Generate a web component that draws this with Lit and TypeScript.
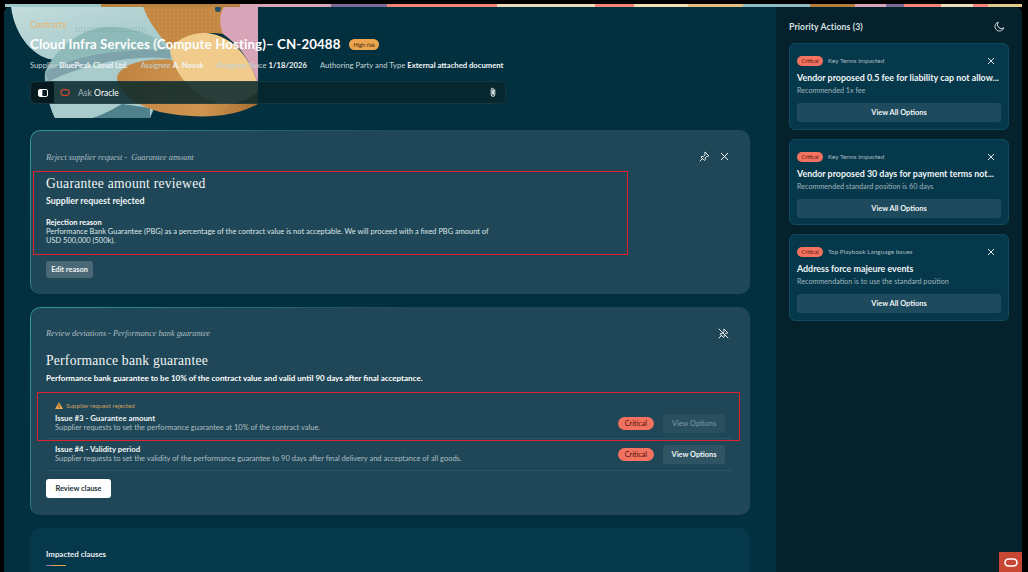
import { LitElement, html, css, svg } from "lit";
import { customElement } from "lit/decorators.js";

const x = (s = 10) => html`<svg class="ic" width=${s} height=${s} viewBox="0 0 10 10" fill="none" stroke="#fff" stroke-width="1.1" stroke-linecap="round"><path d="M1.5 1.5l7 7M8.5 1.5l-7 7"/></svg>`;
const pinPath = svg`<path d="M6.2 1.2l3.6 3.6-1 .6-.8-.2-1.8 1.8.1 1.7-.7.7L1.9 6.2l.7-.7 1.7.1L6.1 3.8 5.9 3z"/><path d="M3.6 7.4L1 10"/>`;

interface Act { cat: string; title: string; sub: string }
const actions: Act[] = [
  { cat: "Key Terms Impacted", title: "Vendor proposed 0.5 fee for liability cap not allow...", sub: "Recommended 1x fee" },
  { cat: "Key Terms Impacted", title: "Vendor proposed 30 days for payment terms not...", sub: "Recommended standard position is 60 days" },
  { cat: "Top Playbook Language Issues", title: "Address force majeure events", sub: "Recommendation is to use the standard position" },
];

@customElement("app-root")
export class AppRoot extends LitElement {
  static styles = css`
    :host { display: block; height: 100vh; overflow: hidden; background: #000; font-family: Lato, "Noto Sans", sans-serif; color: #fff; }
    * { box-sizing: border-box; }
    .frame { height: 100%; padding: 4px 6px 0 4px; display: flex; flex-direction: column; position: relative; }
    .strip { height: 3px; flex: none; margin-left: 1px; background: linear-gradient(90deg,
      #9fc6c8 0 96px, #b9813f 96px 235px, #d8a5b8 235px 326px, #7a6a96 326px 382px, #f4877a 382px 492px,
      #ecdcbc 492px 590px, #f4877a 590px 629px, #f3dfb6 629px 683px, #e4bd80 683px 738px, #8fbcc0 738px 805px,
      #b57c3c 805px 850px, #d8a5b8 850px 881px, #7a6a96 881px 899px, #f4877a 899px 936px, #ecdcbc 936px 968px,
      #f4877a 968px 983px, #e4c98c 983px 1018px); }
    .body { flex: 1; min-height: 0; display: flex; }
    .main { width: 772px; flex: none; background: #03303f; border-radius: 6px 0 0 0; position: relative; overflow: hidden; padding: 0 26px; }
    .art { position: absolute; left: 0; top: 0; }
    .head { position: relative; height: 123px; padding-top: 13px; }
    .crumb { font-size: 8.6px; line-height: 10px; color: #e8b56e; }
    .titlerow { display: flex; align-items: center; gap: 9px; margin-top: 4px; height: 20px; }
    h1 { margin: 0; font-size: 13.3px; line-height: 20px; font-weight: 700; color: #fff; letter-spacing: .1px; }
    .risk { background: #eda44e; color: #3a2510; font-size: 5.6px; line-height: 11px; height: 11px; padding: 0 4px; border-radius: 6px; }
    .meta { display: flex; gap: 13px; margin-top: 5px; font-size: 7.68px; line-height: 12px; color: #c5d3d7; }
    .meta b { font-weight: 700; color: #f2f6f7; }
    .ask { display: flex; align-items: center; width: 476px; height: 23px; margin-top: 10px; border-radius: 6px; background: rgba(6,38,42,.85); border: 1px solid rgba(70,100,110,.25); overflow: hidden; color: #a8bcc1; font-size: 8.6px; }
    .ask b { color: #fff; font-weight: 400; }
    .side { width: 23px; align-self: stretch; background: #061a20; display: flex; align-items: center; justify-content: center; }
    .ora { margin: 0 8px 0 6px; }
    .ask .sp { flex: 1; }
    .clip { margin-right: 8px; }
    .card { position: relative; background: #1f4757; border-radius: 10px; padding: 0 16px; width: 720px; }
    .card.a::before, .card.b::before { content: ""; position: absolute; inset: 0; border-radius: 10px; border-top: 1px solid #2f9aa0; border-left: 1px solid #2f9aa0; -webkit-mask-image: linear-gradient(125deg, #000 0, transparent 45%); mask-image: linear-gradient(125deg, #000 0, transparent 45%); pointer-events: none; }
    .card.a { height: 164px; }
    .card.b { height: 208px; margin-top: 13px; }
    .card.c { height: 80px; margin-top: 13px; background: #05384a; }
    .lab { font-family: "Liberation Serif", serif; font-style: italic; font-size: 8.3px; line-height: 10px; color: #aebfc4; padding-top: 22px; }
    .a .lab { padding-top: 23px; }
    .acts { position: absolute; right: 21px; top: 21px; display: flex; gap: 10px; align-items: center; }
    h2 { margin: 0; font-family: "Liberation Serif", serif; font-weight: 400; font-size: 13.6px; line-height: 16px; color: #f1f5f6; letter-spacing: .25px; }
    .a h2 { margin-top: 13px; }
    .b h2 { margin-top: 14px; }
    .sr { font-size: 8.9px; line-height: 12px; font-weight: 700; margin-top: 3px; color: #f1f5f6; }
    .rr { font-size: 7.5px; line-height: 9px; font-weight: 700; margin-top: 11px; }
    .rb { font-size: 7.45px; line-height: 9px; color: #dde6e8; width: 448px; }
    .edit { display: block; margin-top: 16px; height: 17px; width: 47px; border-radius: 3px; background: #4a6875; border: 0; color: #f1f5f6; font: 700 7.4px/17px Lato, sans-serif; padding: 0; }
    .lead { font-size: 8px; line-height: 11px; font-weight: 700; margin-top: 4px; }
    .issues { margin-top: 17px; }
    .warn { display: flex; align-items: center; gap: 3px; margin-left: 9px; font-size: 6.3px; line-height: 9px; color: #c99d5e; height: 9px; }
    .row { display: flex; align-items: flex-start; padding: 6px 8px 0 9px; border-bottom: 1px solid #2b5565; height: 32px; width: 687px; }
    .row.first { height: 29px; padding-top: 4px; }
    .row .txt { flex: 1; }
    .t { font-size: 7.8px; line-height: 9px; font-weight: 700; color: #f1f5f6; }
    .s { font-size: 7.5px; line-height: 9px; color: #aebfc4; }
    .pill { background: #f2725f; color: #4a120a; font-size: 7.2px; height: 13px; line-height: 13px; padding: 0 7px; border-radius: 7px; margin: 3px 9px 0 0; }
    .vo { width: 62px; height: 19px; background: #2f5565; border-radius: 3px; border: 0; padding: 0; color: #f1f5f6; font: 700 7.4px/19px Lato, sans-serif; }
    .vo.off { background: #2a5060; color: #7f98a2; font-weight: 400; }
    .rev { display: block; margin-top: 8px; width: 65px; height: 19px; background: #fff; color: #16303a; border: 0; border-radius: 3px; font: 700 7.4px/19px Lato, sans-serif; padding: 0; }
    .imp { padding-top: 21px; font-size: 7.9px; line-height: 10px; font-weight: 700; color: #e9eff1; }
    .ul { width: 20px; height: 1px; margin-top: 6px; background: linear-gradient(90deg, #9a7ca6 0 30%, #e2a24a 30%); }
    .red { position: absolute; border: 1px solid #e0202a; pointer-events: none; }
    .red.r1 { left: 3px; top: 41px; width: 595px; height: 84px; }
    .red.r2 { left: 7px; top: 85px; width: 703px; height: 49px; }
    .panel { flex: 1; background: #05222c; border-radius: 0 6px 0 0; padding: 12px 13px 0; }
    .ph { display: flex; justify-content: space-between; align-items: center; height: 14px; padding-right: 4px; font-size: 8.7px; font-weight: 700; color: #d5e0e3; letter-spacing: .1px; margin-bottom: 10px; }
    .pc { height: 87px; background: #06384b; border: 1px solid #0d4a5c; border-radius: 6px; padding: 11px 7px 0; margin-bottom: 9px; }
    .pc:nth-of-type(3) { height: 86px; }
    .pt { display: flex; align-items: center; height: 11px; font-size: 6.4px; color: #a8bcc1; }
    .pt .mini { background: #f2725f; color: #5a160c; font-size: 5.5px; height: 10px; line-height: 10px; padding: 0 4.5px; border-radius: 5px; margin-right: 5px; }
    .pt .sp { flex: 1; }
    .pt .ic { margin-right: 6px; }
    .pn { margin-top: 6px; font-size: 8.9px; line-height: 12px; font-weight: 700; color: #f1f5f6; white-space: nowrap; }
    .ps { font-size: 7.2px; line-height: 11px; color: #a0b5bb; margin-top: 1px; }
    .pb { display: block; margin-top: 7px; width: 204px; height: 19px; background: #1d4a5c; border: 0; border-radius: 3px; padding: 0; color: #f1f5f6; font: 700 7.4px/19px Lato, sans-serif; }
    .oracle { position: absolute; right: 6px; bottom: 0; width: 23px; height: 20px; background: #c74634; display: flex; align-items: center; justify-content: center; }
  `;

  render() {
    return html`<div class="frame">
      <div class="strip"></div>
      <div class="body">
        <div class="main">
          <svg class="art" width="254" height="111" viewBox="4 7 254 111">
            <defs>
              <pattern id="d" width="4" height="4" patternUnits="userSpaceOnUse"><circle cx="2" cy="2" r=".8" fill="#e0a868"/></pattern>
              <pattern id="e" width="3" height="3" patternUnits="userSpaceOnUse"><circle cx="1" cy="1" r=".5" fill="#5f8f92"/></pattern>
              <linearGradient id="g" x1="0" y1="0" x2="1" y2="1"><stop offset="0" stop-color="#c4dcdc"/><stop offset="1" stop-color="#9cc4c4"/></linearGradient>
              <linearGradient id="h" x1="0" y1="0" x2="1" y2="0"><stop offset="0" stop-color="#c08340"/><stop offset=".6" stop-color="#d09650"/><stop offset="1" stop-color="#a86e30"/></linearGradient>
            </defs>
            <path d="M11 6H190V60H60C35 62 14 35 11 6Z" fill="url(#g)"/>
            <path d="M45 72C60 40 90 26 110 27C140 28 165 38 175 60L150 118H55C47 100 44 86 45 72Z" fill="#8fbaba"/>
            <rect x="75" y="26" width="70" height="6" fill="url(#e)"/>
            <path d="M45 72C70 58 110 48 170 50L170 58C120 56 80 66 50 84Z" fill="#7ea3aa"/>
            <path d="M48 82C80 66 120 56 165 58L150 118H55C50 108 47 96 48 82Z" fill="#a9cbcb"/>
            <path d="M92 118C105 114 115 108 122 104L150 108V118Z" fill="#4f818c"/>
            <path d="M143 6H240L222 12L223 34C205 30 180 38 170 48C160 36 147 20 143 6Z" fill="#c48843"/>
            <path d="M143 6H240L222 12L223 34C205 30 180 38 170 48C160 36 147 20 143 6Z" fill="url(#d)" opacity=".4"/>
            <circle cx="218" cy="9" r="3" fill="#24506a"/>
            <path d="M117 78C120 62 150 58 172 60C185 80 210 95 258 88V104C230 120 190 118 160 112C135 105 118 92 117 78Z" fill="url(#h)"/>
            <path d="M170 50C175 40 190 33 205 33C228 34 248 52 258 84V92C248 100 235 105 220 104C195 96 175 78 170 50Z" fill="#f0cb8c"/>
            <path d="M225 6H258V84C250 60 240 46 223 34C218 22 220 12 225 6Z" fill="#d8a5b8"/>
          </svg>
          <div class="head">
            <div class="crumb">Contracts</div>
            <div class="titlerow"><h1>Cloud Infra Services (Compute Hosting)– CN-20488</h1><span class="risk">High risk</span></div>
            <div class="meta">
              <span>Supplier <b>BluePeak Cloud Ltd.</b></span>
              <span>Assignee <b>A. Novak</b></span>
              <span>Assignee Since <b>1/18/2026</b></span>
              <span>Authoring Party and Type <b>External attached document</b></span>
            </div>
            <div class="ask">
              <span class="side"><svg width="10" height="8" viewBox="0 0 10 8"><rect x=".5" y=".5" width="9" height="7" rx="1.5" fill="none" stroke="#fff"/><rect x="1" y="1" width="3.4" height="6" fill="#fff"/></svg></span>
              <svg class="ora" width="10" height="7" viewBox="0 0 10 7"><rect x=".7" y=".7" width="8.6" height="5.6" rx="2.8" fill="none" stroke="#d0492f" stroke-width="1.2"/></svg>
              <span>Ask <b>Oracle</b></span>
              <span class="sp"></span>
              <svg class="clip" width="8" height="11" viewBox="0 0 8 11" fill="none" stroke="#dfe7e9" stroke-width="1" stroke-linecap="round"><path d="M5.8 2.8V7.6a1.8 1.8 0 0 1-3.6 0V2.4a1.2 1.2 0 0 1 2.4 0V7.2a.5.5 0 0 1-1 0V3"/></svg>
            </div>
          </div>

          <section class="card a">
            <div class="lab">Reject supplier request -&nbsp; Guarantee amount</div>
            <div class="acts">
              <svg width="11" height="11" viewBox="0 0 11 11" fill="none" stroke="#fff" stroke-width=".9" stroke-linejoin="round" stroke-linecap="round">${pinPath}</svg>
              ${x(9)}
            </div>
            <h2>Guarantee amount reviewed</h2>
            <div class="sr">Supplier request rejected</div>
            <div class="rr">Rejection reason</div>
            <div class="rb">Performance Bank Guarantee (PBG) as a percentage of the contract value is not acceptable. We will proceed with a fixed PBG amount of USD 500,000 (500k).</div>
            <button class="edit">Edit reason</button>
            <div class="red r1"></div>
          </section>

          <section class="card b">
            <div class="lab">Review deviations - Performance bank guarantee</div>
            <div class="acts">
              <svg width="11" height="11" viewBox="0 0 11 11" fill="none" stroke="#fff" stroke-width=".9" stroke-linejoin="round" stroke-linecap="round">${pinPath}<path d="M1 1l9 9"/></svg>
            </div>
            <h2>Performance bank guarantee</h2>
            <div class="lead">Performance bank guarantee to be 10% of the contract value and valid until 90 days after final acceptance.</div>
            <div class="issues">
              <div class="warn"><svg width="8" height="7" viewBox="0 0 8 7"><path d="M4 0l4 7H0z" fill="#eda44e"/><path d="M4 2.4v2.2M4 5.3v.7" stroke="#33200c" stroke-width=".7"/></svg>Supplier request rejected</div>
              <div class="row first">
                <div class="txt"><div class="t">Issue #3 - Guarantee amount</div><div class="s">Supplier requests to set the performance guarantee at 10% of the contract value.</div></div>
                <span class="pill">Critical</span><button class="vo off">View Options</button>
              </div>
              <div class="row">
                <div class="txt"><div class="t">Issue #4 - Validity period</div><div class="s">Supplier requests to set the validity of the performance guarantee to 90 days after final delivery and acceptance of all goods.</div></div>
                <span class="pill">Critical</span><button class="vo">View Options</button>
              </div>
            </div>
            <button class="rev">Review clause</button>
            <div class="red r2"></div>
          </section>

          <section class="card c">
            <div class="imp">Impacted clauses</div>
            <div class="ul"></div>
          </section>
        </div>

        <aside class="panel">
          <div class="ph"><span>Priority Actions (3)</span>
            <svg width="11" height="11" viewBox="0 0 11 11" fill="none" stroke="#eef3f4" stroke-width=".9"><path d="M4.2 1.2A4.5 4.5 0 1 0 9.8 6.8 4 4 0 0 1 4.2 1.2Z"/></svg>
          </div>
          ${actions.map((a) => html`<div class="pc">
            <div class="pt"><span class="mini">Critical</span><span>${a.cat}</span><span class="sp"></span>${x(8)}</div>
            <div class="pn">${a.title}</div>
            <div class="ps">${a.sub}</div>
            <button class="pb">View All Options</button>
          </div>`)}
        </aside>
      </div>
      <div class="oracle"><svg width="14" height="9" viewBox="0 0 14 9"><rect x="1" y="1" width="12" height="7" rx="3.5" fill="none" stroke="#fff" stroke-width="1.6"/></svg></div>
    </div>`;
  }
}
